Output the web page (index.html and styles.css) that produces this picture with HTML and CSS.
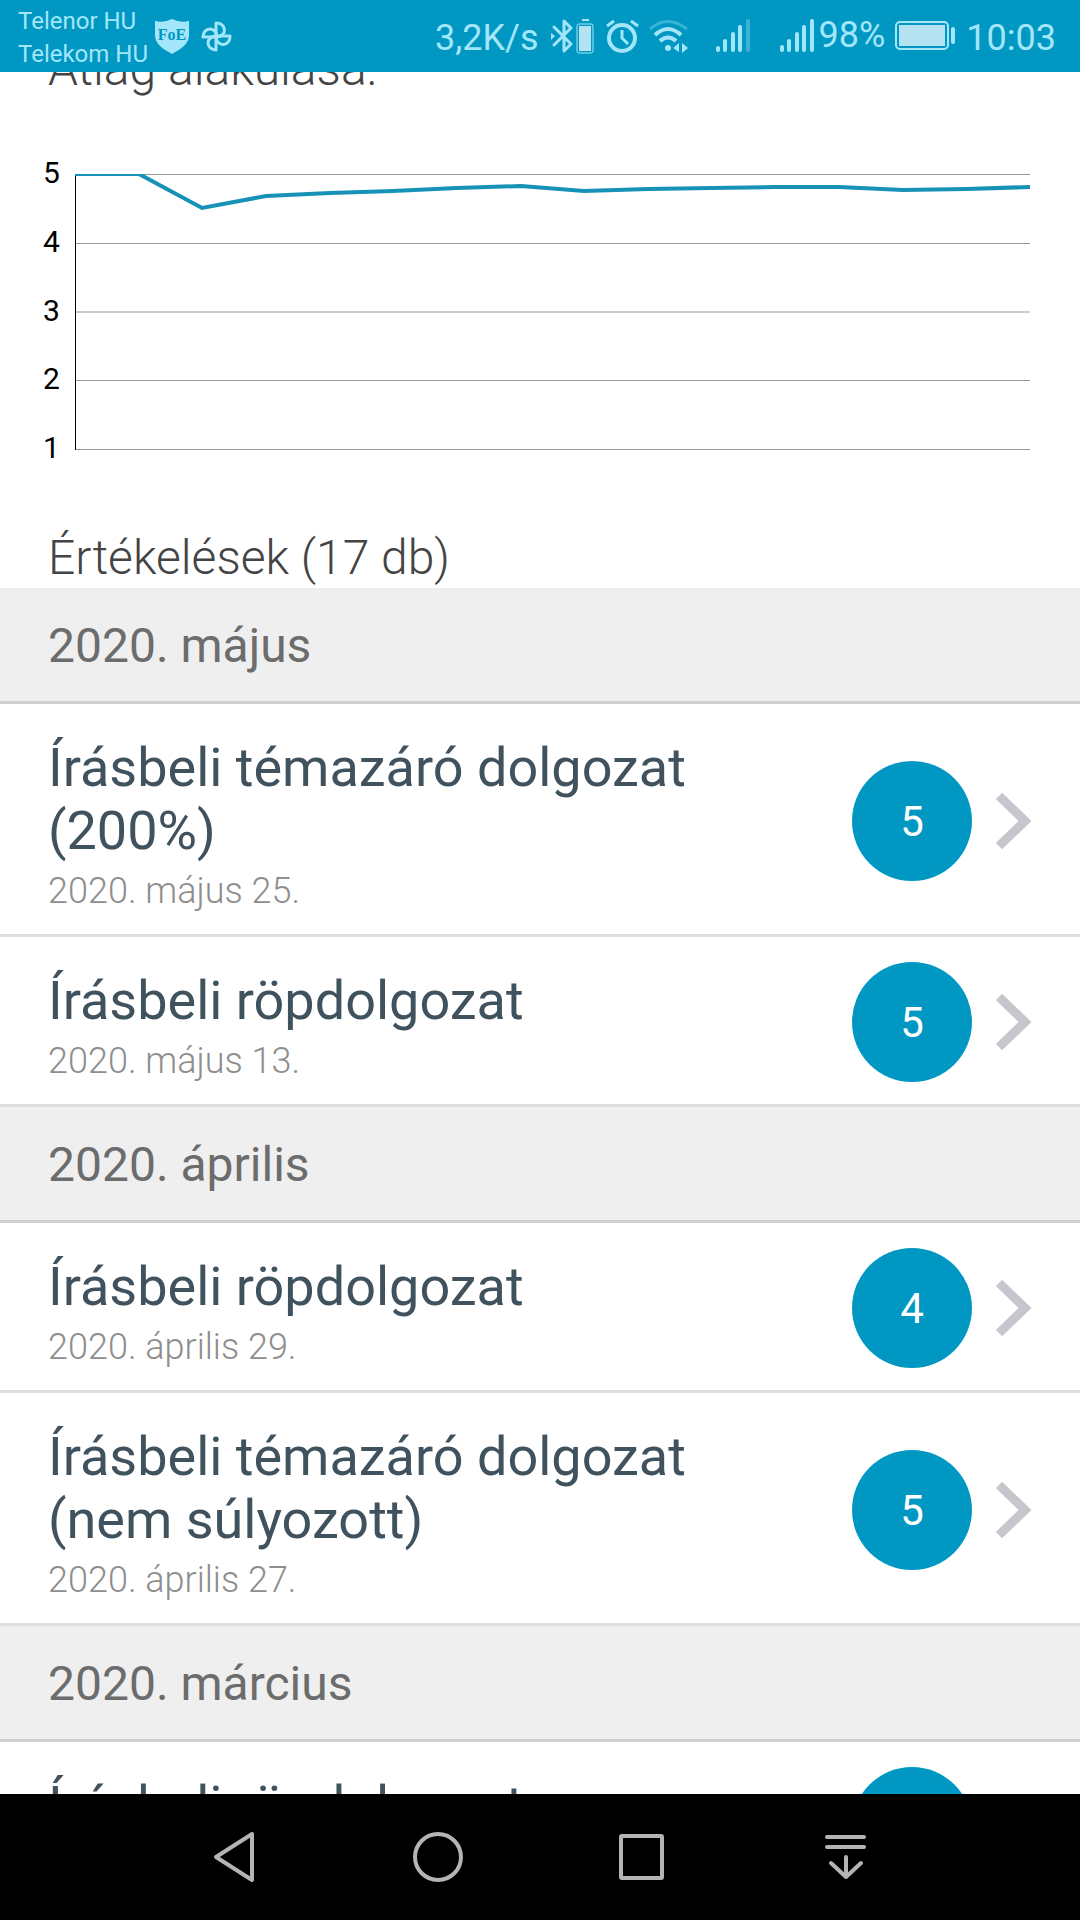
FILE: index.html
```html
<!DOCTYPE html>
<html lang="hu">
<head>
<meta charset="utf-8">
<meta name="viewport" content="width=device-width, initial-scale=1">
<title>Értékelések</title>
<link rel="stylesheet" href="styles.css">
</head>
<body>
<header class="status">
  <div class="carriers"><span>Telenor HU</span><span>Telekom HU</span></div>
  <svg class="notes" viewBox="152 16 84 40" width="84" height="40" aria-hidden="true">
    <path fill="currentColor" d="M155 21q9 2 17-2q8 4 17 2v14c0 9-8 14-17 19c-9-5-17-10-17-19z"/>
    <text class="foe" x="172" y="40" text-anchor="middle">FoE</text>
    <g fill="none" stroke="currentColor" stroke-width="3" stroke-linejoin="round">
      <path d="M216 37V23a8 7 0 0 1 1 14z"/>
      <path d="M216 36h14a7 8 0 0 1-14 1z"/>
      <path d="M216 36v14a8 7 0 0 1 0-14z"/>
      <path d="M217 37h-14a7 8 0 0 1 14 0z"/>
    </g>
  </svg>
  <div class="system">
    <span>3,2K/s</span>
    <svg viewBox="547 16 50 40" width="50" height="40" aria-hidden="true">
      <path fill="none" stroke="currentColor" stroke-width="3" stroke-linejoin="round" stroke-linecap="round" d="M554 27l17 17-7 7V21l7 7-17 17"/>
      <path fill="currentColor" d="M551 33l4 3-4 4zM582 19h7v2h-7z"/>
      <rect x="577" y="24" width="16" height="29" rx="2" fill="none" stroke="currentColor"/>
      <rect class="charge" x="579" y="26" width="12" height="25"/>
    </svg>
    <svg viewBox="601 16 42 40" width="42" height="40" aria-hidden="true">
      <g fill="none" stroke="currentColor" stroke-width="4"><circle cx="622" cy="38" r="13"/>
      <path stroke-width="3" d="M622 30v8l6 6M607 26l7-5M638 26l-7-5"/></g>
    </svg>
    <svg viewBox="647 16 60 40" width="60" height="40" aria-hidden="true">
      <g fill="none" stroke="currentColor" stroke-width="4">
      <path opacity=".35" stroke-width="3" d="M650 29q17-15 37 0"/><path d="M655 35q13-12 26 0M660 41q8-7 16 0"/></g>
      <circle cx="668" cy="48" r="3" fill="currentColor"/>
      <path fill="currentColor" d="M673 48l6-5v9zM682 43l6 5-6 5z"/>
    </svg>
    <svg viewBox="711 16 104 40" width="104" height="40" aria-hidden="true">
      <g stroke="currentColor" stroke-width="4" stroke-linecap="round">
      <path d="M718 48v2M725 41v9M733 34v16M740 27v23M782 47v3M789 41v9M797 34v16M804 27v23M812 21v29"/>
      <path opacity=".35" d="M748 21v29"/></g>
    </svg>
    <span class="percent">98%</span>
    <svg viewBox="890 16 73 40" width="73" height="40" aria-hidden="true">
      <rect x="897" y="22" width="52" height="27" rx="4" fill="none" stroke="currentColor" stroke-width="2"/>
      <rect class="charge" x="900" y="25" width="46" height="21"/>
      <path stroke="currentColor" stroke-width="4" stroke-linecap="round" d="M954 29v13"/>
    </svg>
    <time>10:03</time>
  </div>
</header>

<main class="content">
  <h2 class="caption caption-first">Átlag alakulása:</h2>
  <figure class="chart">
    <div class="axis"><span>5</span><span>4</span><span>3</span><span>2</span><span>1</span></div>
    <svg class="plot" viewBox="0 0 955 276" preserveAspectRatio="none" role="img" aria-label="Átlag alakulása">
      <path class="grid" d="M0 .5h955M0 69.500h955M0 138h955M0 206.500h955M0 275.500h955"/>
      <path class="y-line" d="M.5 0v276"/>
      <polyline class="average" points="0,0 64,0 127,34 191,22 255,19 318,17 382,14 446,12 509,17 573,15 637,14 700,13 764,13 828,16 891,15 955,13"/>
    </svg>
  </figure>
  <h2 class="caption caption-list">Értékelések (17 db)</h2>

  <section>
    <h3 class="month">2020. május</h3>
    <a class="row" href="#"><span class="info"><span class="title">Írásbeli témazáró dolgozat (200%)</span><span class="date">2020. május 25.</span></span><span class="grade">5</span><svg class="chevron" viewBox="0 0 36 56" aria-hidden="true"><path d="M3 3l26 25L3 53"/></svg></a>
    <a class="row" href="#"><span class="info"><span class="title">Írásbeli röpdolgozat</span><span class="date">2020. május 13.</span></span><span class="grade">5</span><svg class="chevron" viewBox="0 0 36 56" aria-hidden="true"><path d="M3 3l26 25L3 53"/></svg></a>
  </section>
  <section>
    <h3 class="month">2020. április</h3>
    <a class="row" href="#"><span class="info"><span class="title">Írásbeli röpdolgozat</span><span class="date">2020. április 29.</span></span><span class="grade">4</span><svg class="chevron" viewBox="0 0 36 56" aria-hidden="true"><path d="M3 3l26 25L3 53"/></svg></a>
    <a class="row" href="#"><span class="info"><span class="title">Írásbeli témazáró dolgozat (nem súlyozott)</span><span class="date">2020. április 27.</span></span><span class="grade">5</span><svg class="chevron" viewBox="0 0 36 56" aria-hidden="true"><path d="M3 3l26 25L3 53"/></svg></a>
  </section>
  <section>
    <h3 class="month">2020. március</h3>
    <a class="row" href="#"><span class="info"><span class="title">Írásbeli röpdolgozat</span></span><span class="grade"></span><svg class="chevron" viewBox="0 0 36 56" aria-hidden="true"><path d="M3 3l26 25L3 53"/></svg></a>
  </section>
</main>

<nav class="keys">
  <button type="button" aria-label="Vissza"><svg viewBox="0 0 56 56"><path d="M46 5L10 28l36 23z"/></svg></button>
  <button type="button" aria-label="Kezdőlap"><svg viewBox="0 0 56 56"><circle cx="28" cy="28" r="23"/></svg></button>
  <button type="button" aria-label="Legutóbbiak"><svg viewBox="0 0 56 56"><rect x="7" y="7" width="41" height="42" rx="1"/></svg></button>
  <button type="button" aria-label="Értesítések"><svg viewBox="0 0 56 56"><path d="M9 8h37M9 18h37M28 28v20M13 34l15 14 15-14"/></svg></button>
</nav>
</body>
</html>
```
FILE: styles.css
```css
* { box-sizing: border-box; }

body {
  margin: 0;
  height: 100vh;
  display: flex;
  flex-direction: column;
  background: #fff;
  font-family: Roboto, "Noto Sans", sans-serif;
}

/* Status bar */
.status {
  flex: none;
  height: 72px;
  display: flex;
  align-items: center;
  padding: 0 24px 0 18px;
  background: #0098c3;
  color: #a3e6fa;
  position: relative;
  z-index: 1;
}
.carriers {
  width: 134px;
  padding-top: 4px;
  font-size: 24px;
  line-height: 33px;
  display: flex;
  flex-direction: column;
  white-space: nowrap;
}
.foe { font: bold 16px "Liberation Serif", serif; fill: #0098c3; }
.system {
  margin-left: auto;
  display: flex;
  align-items: center;
  gap: 4px;
  font-size: 36px;
  line-height: 42px;
}
.system span, .system time { padding-top: 3px; }
.system span:first-child { margin-right: 4px; }
.system .percent { padding: 0 0 2px; }
.charge { fill: #b5e2f0; }

/* Scrolling content */
.content {
  flex: 1;
  min-height: 0;
  overflow-y: auto;
  scrollbar-width: none;
}
.caption {
  margin: 0;
  padding: 0 48px;
  font-size: 48px;
  line-height: 56px;
  font-weight: 300;
  color: #444;
}
.caption-first { margin-top: -31px; }
.caption-list { padding-bottom: 2px; }

.chart {
  margin: 58px 50px 65px 43px;
  display: flex;
  gap: 15px;
}
.axis {
  height: 310px;
  width: 17px;
  display: flex;
  flex-direction: column;
  justify-content: space-between;
  font-size: 30px;
  line-height: 35px;
  color: #000;
}
.plot {
  flex: 1;
  min-width: 0;
  height: 276px;
  margin-top: 19px;
  overflow: hidden;
}
.plot path, .plot polyline { fill: none; vector-effect: non-scaling-stroke; }
.grid { stroke: #999; }
.y-line { stroke: #000; }
.average { stroke: #1592b5; stroke-width: 4; }

.month {
  margin: 0;
  padding: 30px 48px 27px;
  border-bottom: 3px solid #d0d0d0;
  background: #efefef;
  color: #6c6c6c;
  font-size: 48px;
  line-height: 56px;
  font-weight: 400;
}
.row {
  display: flex;
  align-items: center;
  min-height: 170px;
  padding: 3px 48px 0;
  border-bottom: 3px solid #dedede;
  text-decoration: none;
}
.info {
  flex: 1;
  align-self: flex-start;
  display: flex;
  flex-direction: column;
  gap: 8px;
  padding: 29px 100px 22px 0;
}
.title { font-size: 54px; line-height: 63px; color: #41525f; }
.date { font-size: 36px; line-height: 42px; font-weight: 300; color: #8e8e8e; }
.grade {
  flex: none;
  width: 120px;
  height: 120px;
  border-radius: 50%;
  background: #0098c3;
  color: #fff;
  font-size: 42px;
  line-height: 122px;
  text-align: center;
}
.chevron {
  flex: none;
  width: 36px;
  height: 56px;
  margin-left: 24px;
  fill: none;
  stroke: #c6c6cc;
  stroke-width: 9;
}

/* Navigation keys */
.keys {
  flex: none;
  height: 126px;
  display: grid;
  grid-template-columns: repeat(4, 1fr);
  padding: 0 132px;
  background: #000;
}
.keys button {
  display: flex;
  align-items: center;
  justify-content: center;
  padding: 0;
  border: 0;
  background: none;
}
.keys svg {
  width: 56px;
  height: 56px;
  fill: none;
  stroke: #b4b4b4;
  stroke-width: 4;
  stroke-linecap: round;
  stroke-linejoin: round;
}
```
